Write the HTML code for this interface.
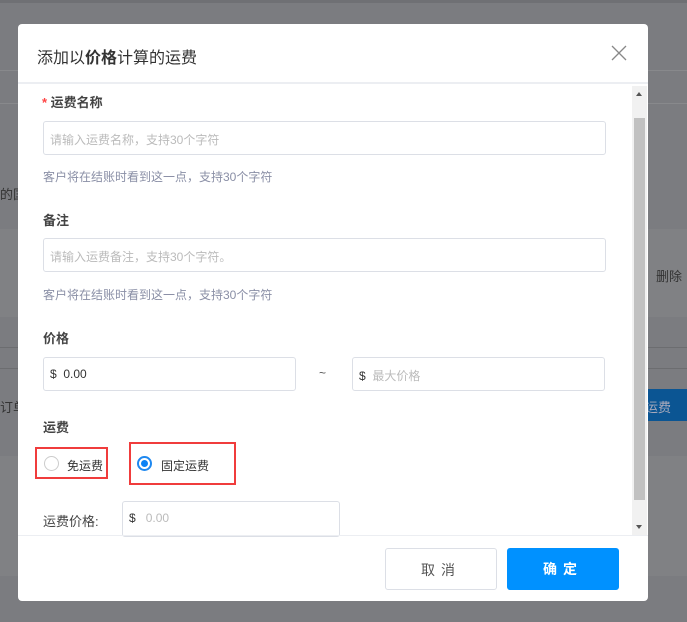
<!DOCTYPE html>
<html><head><meta charset="utf-8"><style>
*{box-sizing:border-box;margin:0;padding:0}
body{width:687px;height:622px;position:relative;overflow:hidden;background:#7b7c80;font-family:"Liberation Sans","Noto Sans CJK SC",sans-serif;}
.band{position:absolute;left:0;width:687px}
.modal{position:absolute;left:18px;top:24px;width:630px;height:577px;background:#fff;border-radius:4px;overflow:hidden}
.hd{height:60px;border-bottom:2px solid #eceef2;position:relative}
.hd .t{position:absolute;left:19px;top:20px;font-size:16px;color:#333}
.x{position:absolute;left:592px;top:20px}
.lbl{position:absolute;font-size:13px;font-weight:bold;color:#444}
.inp{position:absolute;height:34px;border:1px solid #dcdfe6;border-radius:3px;font-size:12px;color:#bbb;padding:9px 6px;}
.help{position:absolute;font-size:12px;color:#8a8fa6}
.sb{position:absolute;left:614px;top:62px;width:15px;height:450px;background:#f1f1f1}
.thumb{position:absolute;left:2px;top:32px;width:11px;height:382px;background:#c1c1c1}
.ft{position:absolute;left:0;top:511px;width:630px;height:66px;border-top:1px solid #eceef2}
.btn{position:absolute;top:12px;height:42px;border-radius:3px;font-size:14px;text-align:center;line-height:42px;letter-spacing:6px}
.red{position:absolute;border:2px solid #f03c3c}
.radio{position:absolute;width:15px;height:15px;border-radius:50%;border:1px solid #ccc}
</style></head><body>
<div class="band" style="top:0;height:3px;background:#6f7074"></div>
<div class="band" style="top:70px;height:1px;background:#88898c"></div>
<div class="band" style="top:103px;height:1px;background:#88898c"></div>
<div class="band" style="top:229px;height:88px;background:#808184"></div>
<div class="band" style="top:347px;height:1px;background:#6c6d70"></div>
<div class="band" style="top:368px;height:1px;background:#6c6d70"></div>
<div class="band" style="top:456px;height:120px;background:#808184"></div>
<div style="position:absolute;left:0;top:184px;font-size:13px;color:#333">的国</div>
<div style="position:absolute;left:0;top:397px;font-size:13px;color:#333">订单</div>
<div style="position:absolute;left:656px;top:266px;font-size:13px;color:#333">删除</div>
<div style="position:absolute;left:630px;top:389px;width:57px;height:32px;background:#0b5593;color:#aab;font-size:13px;padding:8px 0 0 15px">运费</div>
<div class="modal">
 <div class="hd"><div class="t">添加以<b>价格</b>计算的运费</div>
  <svg class="x" width="18" height="18" viewBox="0 0 18 18"><path d="M2 2L16 16M16 2L2 16" stroke="#888" stroke-width="1.3"/></svg></div>
 <div class="lbl" style="left:24px;top:68px"><span style="color:#f44">*</span> 运费名称</div>
 <div class="inp" style="left:25px;top:97px;width:563px">请输入运费名称，支持30个字符</div>
 <div class="help" style="left:25px;top:144px">客户将在结账时看到这一点，支持30个字符</div>
 <div class="lbl" style="left:25px;top:186px">备注</div>
 <div class="inp" style="left:25px;top:214px;width:563px">请输入运费备注，支持30个字符。</div>
 <div class="help" style="left:25px;top:262px">客户将在结账时看到这一点，支持30个字符</div>
 <div class="lbl" style="left:25px;top:304px">价格</div>
 <div class="inp" style="left:25px;top:333px;width:253px;color:#333">$ &nbsp;0.00</div>
 <div style="position:absolute;left:301px;top:342px;font-size:12px;color:#555">~</div>
 <div class="inp" style="left:334px;top:333px;width:253px"><span style="color:#333">$</span> &nbsp;最大价格</div>
 <div class="lbl" style="left:25px;top:393px">运费</div>
 <div class="red" style="left:17px;top:423px;width:73px;height:32px"></div>
 <div class="radio" style="left:26px;top:432px"></div>
 <div style="position:absolute;left:49px;top:433px;font-size:12px;color:#333">免运费</div>
 <div class="red" style="left:111px;top:418px;width:107px;height:43px"></div>
 <div class="radio" style="left:119px;top:432px;border:4px solid #1e88f0;background:#0f7ef0"></div>
 <div class="radio" style="left:121px;top:434px;width:11px;height:11px;border:2px solid #fff;background:#0b82f5"></div>
 <div style="position:absolute;left:143px;top:433px;font-size:12px;color:#333">固定运费</div>
 <div style="position:absolute;left:25px;top:487px;font-size:13px;color:#444">运费价格:</div>
 <div class="inp" style="left:104px;top:477px;width:218px;height:36px"><span style="color:#333">$</span> &nbsp; 0.00</div>
 <div class="sb"><div class="thumb"></div>
  <div style="position:absolute;left:4px;top:6px;border:3px solid transparent;border-bottom:4px solid #555;border-top:0"></div>
  <div style="position:absolute;left:4px;top:439px;border:3px solid transparent;border-top:4px solid #555;border-bottom:0"></div></div>
 <div class="ft">
  <div class="btn" style="left:367px;width:112px;border:1px solid #dcdfe6;color:#555;background:#fff">取消</div>
  <div class="btn" style="left:489px;width:112px;background:#0091ff;color:#fff;font-weight:bold">确定</div>
 </div>
</div>
</body></html>
